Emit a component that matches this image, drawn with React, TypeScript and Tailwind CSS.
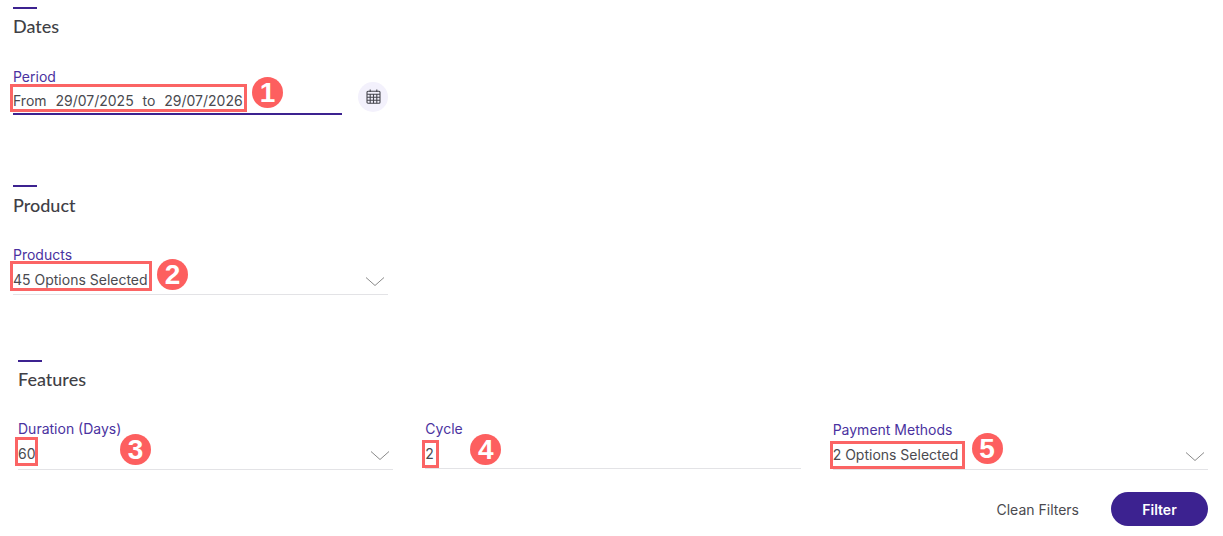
import React from 'react';

// Red numbered circle drawn over the form
const Badge = ({ n, className }: { n: number; className: string }) => (
  <div className={`absolute w-[31px] h-[31px] rounded-full bg-[#fd5f5f] text-white flex items-center justify-center font-['Liberation_Sans',sans-serif] font-bold text-[28px] leading-none ${className}`}>
    {n}
  </div>
);

// Red rectangle drawn around a value
const Marker = ({ className }: { className: string }) => (
  <div className={`absolute border-[3px] border-[#fb6464] ${className}`} />
);

const Heading = ({ title, className }: { title: string; className: string }) => (
  <div className={`flex flex-col ${className}`}>
    <div className="w-6 h-[2px] bg-[#3c2290]" />
    <h2 className="text-[18px] leading-[18px] text-[#3f3f46] font-['Lato',sans-serif] font-medium">{title}</h2>
  </div>
);

const Chevron = () => (
  <svg className="mt-[5px] mr-[3px] shrink-0" width="20" height="11" viewBox="0 0 20 11" fill="none" stroke="#8a8a8a" strokeWidth="1">
    <path d="M1 1.5 L10 9.5 L19 1.5" />
  </svg>
);

type FieldProps = {
  label: string;
  value: string;
  className: string;
  valueClass?: string;
  select?: boolean;
  children?: React.ReactNode;
};

const Field = ({ label, value, className, valueClass = '', select, children }: FieldProps) => (
  <div className={`relative flex flex-col ${className}`}>
    <div className="text-[14px] leading-[17px] text-[#4a32a0]">{label}</div>
    <div className={`flex justify-between items-start text-[14px] leading-[17px] text-[#4a4a4f] whitespace-pre ${valueClass}`}>
      {value}
      {select && <Chevron />}
    </div>
    {children}
  </div>
);

export default function App() {
  return (
    <div className="w-[1223px] h-[536px] bg-white overflow-hidden font-['Inter',sans-serif]">
      {/* Dates */}
      <section className="pl-[13px] pt-[7px]">
        <Heading title="Dates" className="gap-[8px]" />
        <div className="mt-[33px] flex items-start gap-[16px]">
          <Field label="Period" value="From  29/07/2025  to  29/07/2026" valueClass="[word-spacing:0.5px]" className="gap-[7px] w-[329px] h-[47px] border-b-2 border-[#3c2290]">
            <Marker className="left-[-3px] top-[16px] w-[237px] h-[28px]" />
            <Badge n={1} className="left-[239px] top-[9px]" />
          </Field>
          <div className="mt-[14px] w-[30px] h-[30px] rounded-full bg-[#f3f1fc] flex items-center justify-center">
            <svg className="mb-[2px]" width="15" height="15" viewBox="0 0 15 15" fill="none" stroke="#45454d" strokeWidth="1.1">
              <rect x="1" y="2.2" width="13" height="12" rx="1" />
              <path d="M1 5.2H14M1 8.2H14M1 11.2H14M4.2 5.2V14.2M7.5 5.2V14.2M10.8 5.2V14.2M4.2 0.5V3M10.8 0.5V3" />
            </svg>
          </div>
        </div>
      </section>

      {/* Product */}
      <section className="pl-[13px] mt-[70px]">
        <Heading title="Product" className="gap-[9px]" />
        <div className="mt-[32px] w-[375px]">
          <Field label="Products" value="45 Options Selected" select className="gap-[8px] h-[49px] border-b border-[#e3e3e6]">
            <Marker className="left-[-3px] top-[15px] w-[142px] h-[30px]" />
            <Badge n={2} className="left-[144px] top-[13px]" />
          </Field>
        </div>
      </section>

      {/* Features */}
      <section className="pl-[18px] pr-[15px] mt-[65px]">
        <Heading title="Features" className="gap-[8px]" />
        <div className="mt-[32px] grid grid-cols-3 items-start gap-x-[32px]">
          <Field label="Duration (Days)" value="60" select className="gap-[8px] h-[50px] border-b border-[#e3e3e6]">
            <Marker className="left-[-3px] top-[17px] w-[23px] h-[29px]" />
            <Badge n={3} className="left-[102px] top-[14px]" />
          </Field>
          <Field label="Cycle" value="2" className="gap-[8px] h-[49px] border-b border-[#e3e3e6]">
            <Marker className="left-[-3px] top-[20px] w-[17px] h-[28px]" />
            <Badge n={4} className="left-[45px] top-[14px]" />
          </Field>
          <Field label="Payment Methods" value="2 Options Selected" select className="gap-[8px] mt-px h-[49px] border-b border-[#e3e3e6]">
            <Marker className="left-[-3px] top-[20px] w-[135px] h-[28px]" />
            <Badge n={5} className="left-[139px] top-[12px]" />
          </Field>
        </div>
        <div className="mt-[22px] flex justify-end items-center gap-[32px]">
          <button className="text-[14px] text-[#4a4a4f]">Clean Filters</button>
          <button className="w-[97px] h-[34px] rounded-full bg-[#3c2290] text-white text-[14px] font-semibold">Filter</button>
        </div>
      </section>
    </div>
  );
}
